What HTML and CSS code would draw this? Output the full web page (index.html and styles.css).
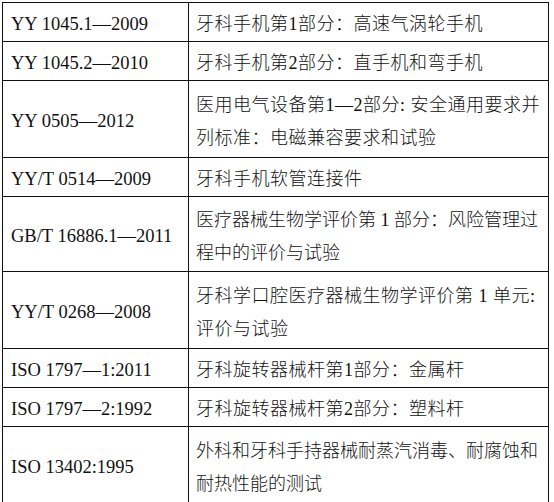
FILE: index.html
```html
<!DOCTYPE html>
<html lang="zh-CN">
<head>
<meta charset="utf-8">
<link rel="stylesheet" href="styles.css">
</head>
<body>
<table class="std">
  <colgroup><col class="c-code"><col class="c-name"></colgroup>
  <tr class="r1"><td class="code">YY 1045.1—2009</td><td class="name">牙科手机第1部分：高速气涡轮手机</td></tr>
  <tr class="r1"><td class="code">YY 1045.2—2010</td><td class="name">牙科手机第2部分：直手机和弯手机</td></tr>
  <tr class="r2"><td class="code">YY 0505—2012</td><td class="name">医用电气设备第1—2部分: 安全通用要求并<br>列标准：电磁兼容要求和试验</td></tr>
  <tr class="r1"><td class="code">YY/T 0514—2009</td><td class="name">牙科手机软管连接件</td></tr>
  <tr class="r2 r2s"><td class="code">GB/T 16886.1—2011</td><td class="name tight">医疗器械生物学评价第 1 部分：风险管理过<br>程中的评价与试验</td></tr>
  <tr class="r2"><td class="code">YY/T 0268—2008</td><td class="name">牙科学口腔医疗器械生物学评价第 1 单元:<br>评价与试验</td></tr>
  <tr class="r1"><td class="code">ISO 1797—1:2011</td><td class="name">牙科旋转器械杆第1部分：金属杆</td></tr>
  <tr class="r1"><td class="code">ISO 1797—2:1992</td><td class="name">牙科旋转器械杆第2部分：塑料杆</td></tr>
  <tr class="r2 r2l"><td class="code">ISO 13402:1995</td><td class="name tight">外科和牙科手持器械耐蒸汽消毒、耐腐蚀和<br>耐热性能的测试</td></tr>
</table>
</body>
</html>
```

FILE: styles.css
```css
html, body {
  margin: 0;
  padding: 0;
  background: #fff;
}

body {
  padding: 2px 0 0 2px;
}

.std {
  border-collapse: collapse;
  width: 547px;
  table-layout: fixed;
  font-family: "Liberation Serif", "Noto Sans CJK SC", serif;
  font-size: 18px;
  color: #111;
}

.c-code { width: 186px; }

.std td {
  border: 1px solid #111;
  padding: 5px 6px 0 8px;
  vertical-align: middle;
  line-height: 33px;
  white-space: nowrap;
}

.std td.code {
  font-size: 18.5px;
}

.std td.name {
  padding-left: 7px;
  letter-spacing: 0.5px;
  font-weight: 300;
}

.std td.name.tight {
  letter-spacing: 0;
}

.r1 { height: 38px; }
.r2 { height: 77px; }
.r2s { height: 75px; }
.r2l { height: 77px; }
```
